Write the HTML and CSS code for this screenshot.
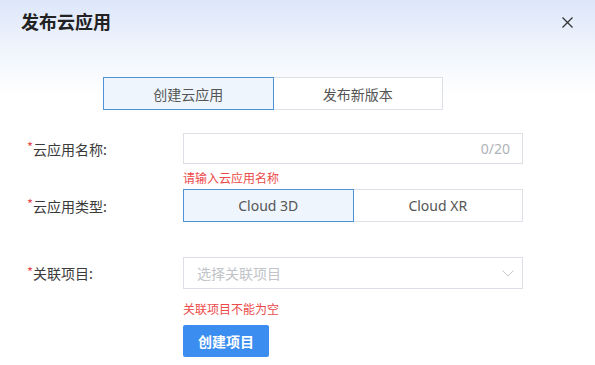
FILE: index.html
```html
<!DOCTYPE html>
<html lang="zh">
<head>
<meta charset="utf-8">
<title>发布云应用</title>
<link rel="stylesheet" href="styles.css">
</head>
<body>
<div class="dialog">
  <div class="header">
    <h1 class="title">发布云应用</h1>
    <button class="close" aria-label="关闭">
      <svg width="11" height="11" viewBox="0 0 11 11"><path d="M0.5 0.5 L10.5 10.5 M10.5 0.5 L0.5 10.5" stroke="#333" stroke-width="1.3" fill="none"/></svg>
    </button>
  </div>

  <div class="tabs">
    <div class="tab active">创建云应用</div>
    <div class="tab">发布新版本</div>
  </div>

  <div class="form">
    <div class="row row-name">
      <label class="label"><span class="star">*</span>云应用名称:</label>
      <div class="control">
        <div class="input"><span class="count">0/20</span></div>
        <div class="error err-name">请输入云应用名称</div>
      </div>
    </div>

    <div class="row row-type">
      <label class="label"><span class="star">*</span>云应用类型:</label>
      <div class="control">
        <div class="radio-group">
          <div class="radio active">Cloud 3D</div>
          <div class="radio">Cloud XR</div>
        </div>
      </div>
    </div>

    <div class="row row-project">
      <label class="label"><span class="star">*</span>关联项目:</label>
      <div class="control">
        <div class="select">
          <span class="placeholder">选择关联项目</span>
          <svg class="chevron" width="12" height="7" viewBox="0 0 12 7"><path d="M0.5 0.5 L6 6 L11.5 0.5" stroke="#c4c7cc" stroke-width="1" fill="none"/></svg>
        </div>
        <div class="error err-project">关联项目不能为空</div>
        <button class="btn-primary">创建项目</button>
      </div>
    </div>
  </div>
</div>
</body>
</html>
```

FILE: styles.css
```css
* { box-sizing: border-box; }
html, body { margin: 0; padding: 0; }
body {
  width: 595px;
  height: 365px;
  overflow: hidden;
  font-family: "Noto Sans", "Noto Sans CJK SC", sans-serif;
  background: #fff;
}
.dialog {
  width: 595px;
  height: 365px;
  background: linear-gradient(180deg, #dde7fa 0px, #eef3fc 45px, #ffffff 95px);
}
.header {
  height: 42px;
  display: flex;
  align-items: center;
  justify-content: space-between;
  padding: 0 22px 0 21px;
}
.title {
  margin: 0;
  font-family: "Noto Sans CJK SC", sans-serif;
  font-size: 18px;
  font-weight: 700;
  line-height: 24px;
  color: #222;
}
.close {
  border: 0;
  background: transparent;
  padding: 0;
  width: 11px;
  height: 11px;
  margin-top: 2px;
  display: flex;
  cursor: pointer;
}
.tabs {
  margin: 35px 0 0 103px;
  width: 340px;
  height: 33px;
  display: flex;
}
.tab {
  flex: 1;
  display: flex;
  align-items: center;
  justify-content: center;
  border: 1px solid #dcdfe6;
  background: #fff;
  font-family: "Noto Sans CJK SC", sans-serif;
  font-size: 14px;
  color: #555;
}
.tab + .tab { border-left: 0; }
.tab.active {
  border-color: #4e93d8;
  background: #eef5fd;
}
.form { margin-top: 23px; }
.row { display: flex; align-items: flex-start; }
.label {
  width: 183px;
  padding-left: 27px;
  font-family: "Noto Sans CJK SC", sans-serif;
  font-size: 14px;
  color: #3a3a3a;
  display: flex;
  align-items: center;
}
.star {
  color: #e5484d;
  font-size: 13px;
  margin-right: 0;
  position: relative;
  top: -2px;
}
.control { width: 340px; }
.row-name .label { height: 31px; }
.input {
  height: 31px;
  border: 1px solid #dcdfe6;
  background: #fff;
  display: flex;
  align-items: center;
  justify-content: flex-end;
  padding-right: 12px;
}
.count {
  font-size: 14px;
  color: #b0b3b8;
}
.error {
  font-family: "Noto Sans CJK SC", sans-serif;
  font-size: 12px;
  line-height: 17px;
  height: 17px;
  color: #ec4a4a;
}
.err-name { margin-top: 5px; }
.row-type { margin-top: 3px; }
.row-type .label { height: 33px; }
.radio-group { display: flex; height: 33px; }
.radio {
  flex: 1;
  display: flex;
  align-items: center;
  justify-content: center;
  border: 1px solid #dcdfe6;
  background: #fff;
  font-size: 14px;
  color: #555;
}
.radio + .radio { border-left: 0; }
.radio.active {
  border-color: #4e93d8;
  background: #eef5fd;
}
.row-project { margin-top: 35px; }
.row-project .label { height: 32px; }
.select {
  height: 32px;
  border: 1px solid #dcdfe6;
  background: #fff;
  display: flex;
  align-items: center;
  justify-content: space-between;
  padding: 0 8px 0 13px;
}
.placeholder {
  font-family: "Noto Sans CJK SC", sans-serif;
  font-size: 14px;
  color: #c0c3c8;
}
.err-project { margin-top: 11px; }
.btn-primary {
  margin-top: 8px;
  width: 86px;
  height: 32px;
  border: 0;
  border-radius: 2px;
  background: #3b8ef0;
  color: #fff;
  font-family: "Noto Sans CJK SC", sans-serif;
  font-size: 14px;
  font-weight: 700;
  padding: 0;
  display: flex;
  align-items: center;
  justify-content: center;
}
```
